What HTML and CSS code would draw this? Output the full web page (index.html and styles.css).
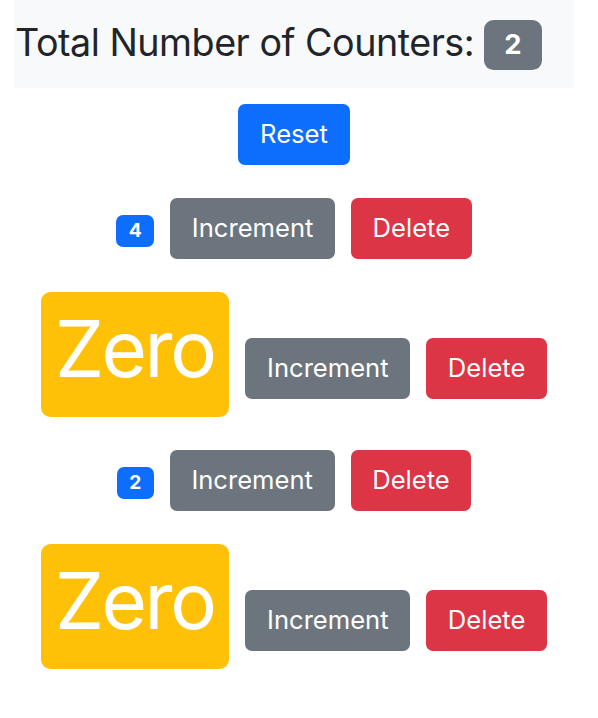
FILE: index.html
```html
<!DOCTYPE html>
<html lang="en">
<head>
<meta charset="utf-8">
<title>Counters</title>
<link rel="stylesheet" href="styles.css">
</head>
<body>
<div class="app">
  <header class="navbar">
    <h2 class="title">Total Number of Counters: <span class="badge badge-secondary">2</span></h2>
  </header>
  <main class="list">
    <div class="row"><button class="btn btn-primary">Reset</button></div>
    <div class="row">
      <span class="badge badge-primary">4</span>
      <button class="btn btn-secondary">Increment</button>
      <button class="btn btn-danger">Delete</button>
    </div>
    <div class="row">
      <span class="zero">Zero</span>
      <button class="btn btn-secondary">Increment</button>
      <button class="btn btn-danger">Delete</button>
    </div>
    <div class="row">
      <span class="badge badge-primary">2</span>
      <button class="btn btn-secondary">Increment</button>
      <button class="btn btn-danger">Delete</button>
    </div>
    <div class="row">
      <span class="zero">Zero</span>
      <button class="btn btn-secondary">Increment</button>
      <button class="btn btn-danger">Delete</button>
    </div>
  </main>
</div>
</body>
</html>
```

FILE: styles.css
```css
* { box-sizing: border-box; }
html, body { margin: 0; padding: 0; background: #fff; }
body {
  font-family: Inter, "Noto Sans", "Liberation Sans", sans-serif;
  color: #212529;
}
.app {
  width: 560px;
  margin-left: 14px;
}
.navbar {
  background: #f8f9fa;
  height: 88px;
  display: flex;
  align-items: center;
  padding: 3px 1px 0;
}
.title {
  margin: 0;
  font-size: 37.7px;
  font-weight: 400;
  line-height: 1.2;
  letter-spacing: -0.5px;
  white-space: nowrap;
}
.badge {
  display: inline-block;
  font-weight: 700;
  line-height: 1;
  color: #fff;
  text-align: center;
  vertical-align: baseline;
  letter-spacing: 0;
}
.badge-secondary {
  background: #6c757d;
  font-size: 27.5px;
  padding: 11px 20px;
  border-radius: 9.6px;
  position: relative;
  top: -1.5px;
}
.badge-primary {
  background: #0d6efd;
  font-size: 19.2px;
  padding: 6.7px 12.5px;
  border-radius: 7px;
}
.list {
  display: flex;
  flex-direction: column;
  gap: 33px;
  padding-top: 16px;
}
.row {
  display: flex;
  justify-content: center;
  align-items: baseline;
  gap: 16px;
}
.btn {
  font-family: inherit;
  font-size: 25.6px;
  line-height: 38.4px;
  height: 61px;
  padding: 9.6px 20.6px;
  border: 1.6px solid transparent;
  border-radius: 7px;
  color: #fff;
  cursor: pointer;
}
.btn-primary { background: #0d6efd; }
.btn-secondary { background: #6c757d; }
.btn-danger { background: #dc3545; }
.zero {
  display: inline-block;
  background: #ffc107;
  color: #fff;
  font-size: 78px;
  letter-spacing: -2.5px;
  line-height: normal;
  height: 125px;
  padding: 9px 15px 0 14px;
  border-radius: 9.6px;
}
```
